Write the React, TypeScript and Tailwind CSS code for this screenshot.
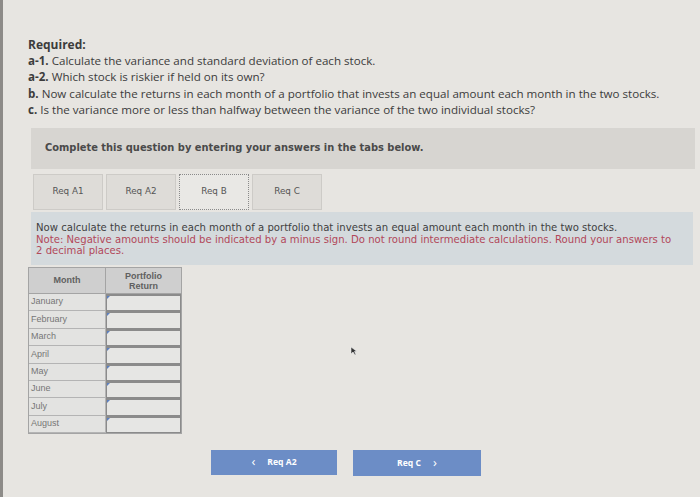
import React from 'react';

const months = ['January', 'February', 'March', 'April', 'May', 'June', 'July', 'August'];

const tabs = ['Req A1', 'Req A2', 'Req B', 'Req C'];

const App: React.FC = () => {
  return (
    <div className="relative w-[700px] h-[497px] overflow-hidden bg-[#e7e5e1] border-l-[3px] border-[#8d8b88] pl-[25px] pt-[37px]">
      {/* question text */}
      <div className="font-['Open_Sans',sans-serif] text-[11.6px] leading-[16.2px] text-[#3c3c3c]">
        <p className="font-bold text-[12px]">Required:</p>
        <p><b>a-1.</b> Calculate the variance and standard deviation of each stock.</p>
        <p><b>a-2.</b> Which stock is riskier if held on its own?</p>
        <p><b>b.</b> Now calculate the returns in each month of a portfolio that invests an equal amount each month in the two stocks.</p>
        <p><b>c.</b> Is the variance more or less than halfway between the variance of the two individual stocks?</p>
      </div>

      {/* instructions bar */}
      <div className="mt-[10px] ml-[3px] mr-[5px] h-[41px] bg-[#d7d5d1] flex items-center pl-[14px] font-['DejaVu_Sans',sans-serif] text-[9.9px] font-bold text-[#4a4a4a]">
        Complete this question by entering your answers in the tabs below.
      </div>

      {/* tabs */}
      <div className="mt-[5px] ml-[5px] flex gap-[3px] h-[36px] font-['DejaVu_Sans',sans-serif] text-[8.8px] text-[#555]">
        {tabs.map(t => (
          <div
            key={t}
            className={
              t === 'Req B'
                ? 'w-[70px] flex items-center justify-center bg-[#e9e8e5] border border-dotted border-[#8a8a8a]'
                : 'w-[70px] flex items-center justify-center bg-[#dedcd8] border border-[#cdcbc7]'
            }
          >
            {t}
          </div>
        ))}
      </div>

      {/* prompt panel */}
      <div className="mt-[2px] ml-[3px] mr-[7px] h-[53px] bg-[#d4dadd] pl-[5px] pr-[14px] pt-[10px] font-['DejaVu_Sans',sans-serif] text-[10.1px] leading-[11.5px]">
        <p className="text-[#3f3f3f]">Now calculate the returns in each month of a portfolio that invests an equal amount each month in the two stocks.</p>
        <p className="text-[#b2485a]">Note: Negative amounts should be indicated by a minus sign. Do not round intermediate calculations. Round your answers to 2 decimal places.</p>
      </div>

      {/* table */}
      <div className="mt-[2px] w-[154px] border border-[#a4a4a4] font-['Liberation_Sans',sans-serif] text-[9px]">
        <div className="flex h-[26px] bg-[#cfcfcf] text-[#606060] font-bold border-b border-[#a4a4a4]">
          <div className="w-[77px] flex items-center justify-center border-r border-[#a4a4a4]">Month</div>
          <div className="flex-1 flex items-center justify-center text-center leading-[10px]">Portfolio<br />Return</div>
        </div>
        {months.map(m => (
          <div key={m} className="flex h-[17.4px] bg-[#e3e3e1]">
            <div className="w-[77px] flex items-center pl-[2px] text-[#767676] border-r border-b border-[#b4b4b4]">{m}</div>
            <div className="relative flex-1 border-[1.5px] border-t-2 border-[#8b8b8b] bg-[#e6e6e4]">
              <div className="absolute left-0 top-0 w-0 h-0 border-t-[3px] border-r-[3px] border-t-[#5b7fc0] border-r-transparent" />
            </div>
          </div>
        ))}
      </div>

      {/* navigation */}
      <div className="mt-[16px] ml-[183px] flex gap-[16px] font-['Open_Sans',sans-serif] text-[8.6px] font-bold text-white">
        <button className="w-[126px] h-[25px] bg-[#6c8dc6] flex items-center justify-center gap-[12px]">
          <span className="text-[13px] leading-none font-normal -mt-[2px]">‹</span>
          <span>Req A2</span>
        </button>
        <button className="w-[128px] h-[26px] bg-[#6c8dc6] flex items-center justify-center gap-[12px]">
          <span>Req C</span>
          <span className="text-[13px] leading-none font-normal -mt-[2px]">›</span>
        </button>
      </div>

      {/* mouse cursor */}
      <svg className="absolute left-[347px] top-[346px]" width="8" height="10" viewBox="0 0 8 10">
        <path d="M1 1 L1 8 L3 6 L5 9 L6 8.5 L4.5 5.5 L7 5.5 Z" fill="#333" stroke="#eee" strokeWidth="0.6" />
      </svg>
    </div>
  );
};

export default App;
